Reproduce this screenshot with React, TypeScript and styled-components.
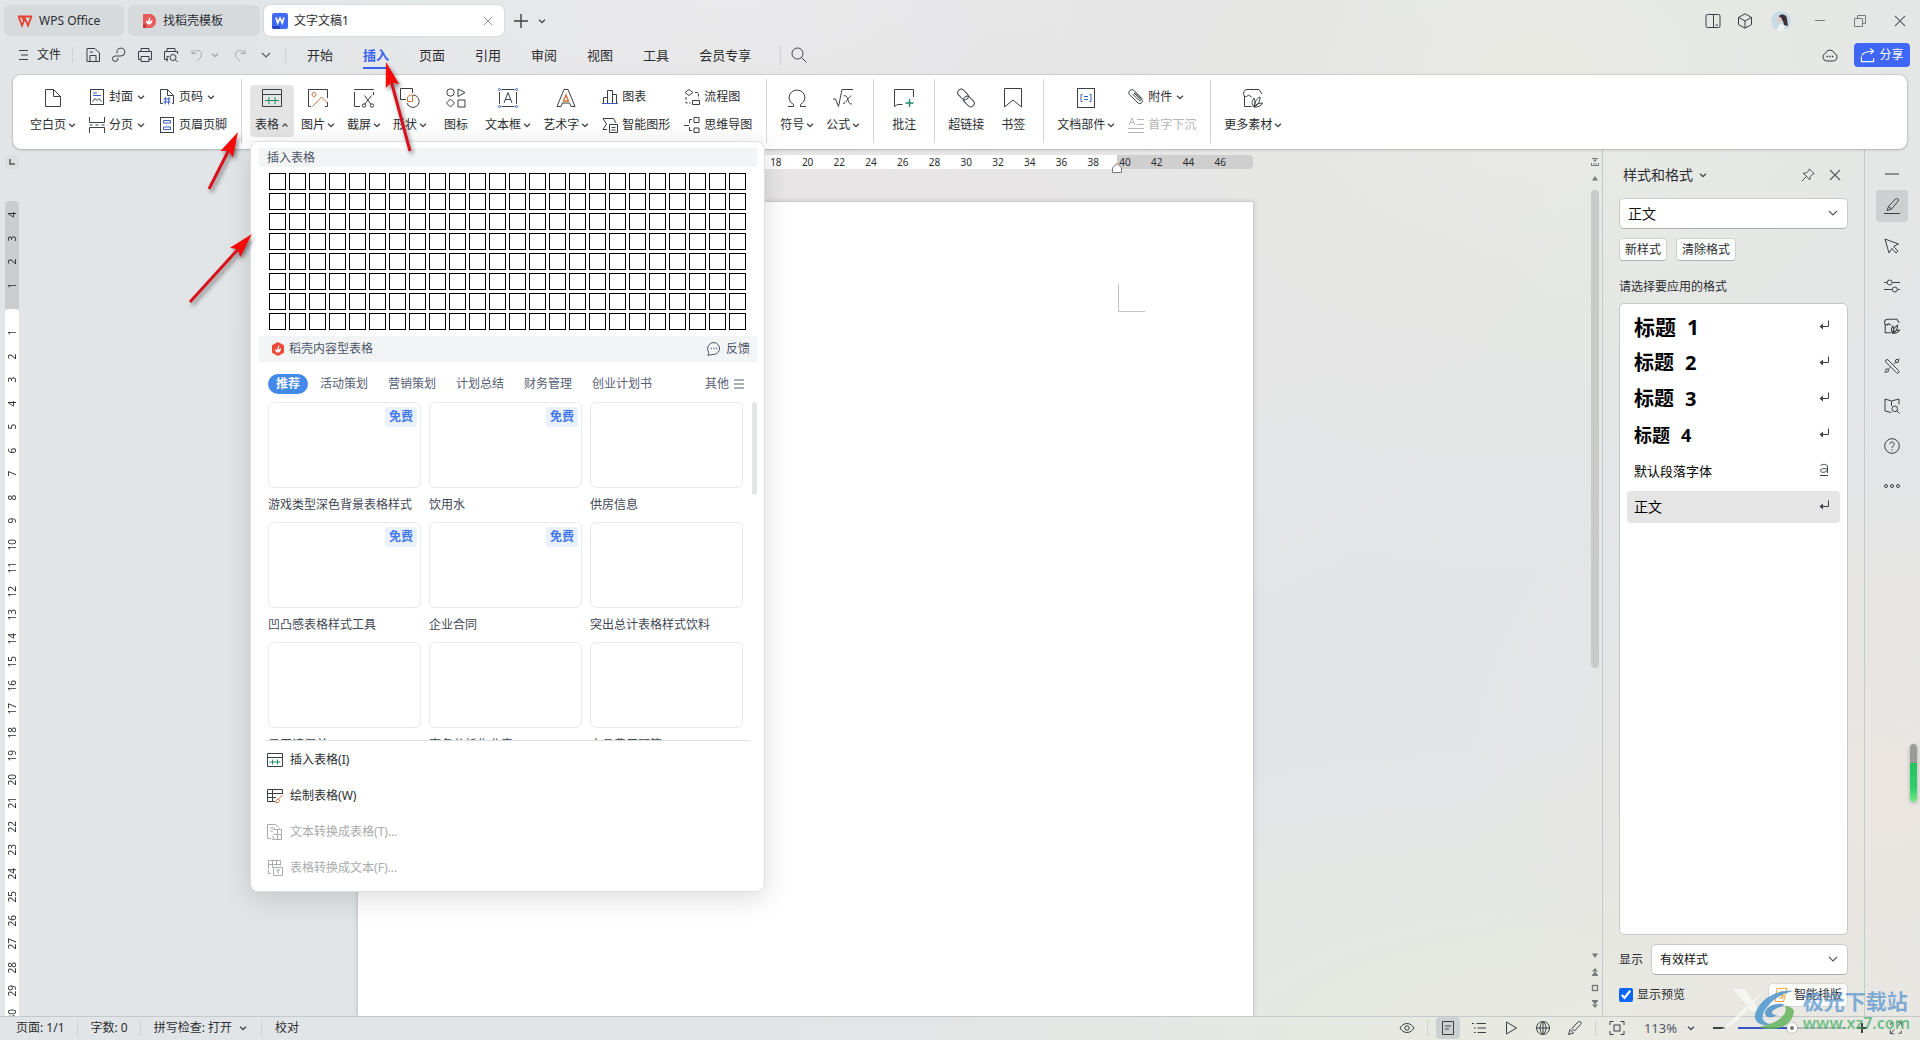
import React from 'react';
import styled, { createGlobalStyle, css } from 'styled-components';

const ink = '#2b2d30';
const blue = '#3a62f0';
const line = '#c6c9cb';
const orange = '#d0733a';
const green = '#1f8a63';
const navy = '#3b5fc0';

const Global = createGlobalStyle`
  *, *::before, *::after { box-sizing: border-box; }
  html, body, #root { margin: 0; height: 100%; }
  body {
    font-family: "Noto Sans", "Noto Sans CJK SC", sans-serif;
    font-size: 12px;
    line-height: 16px;
    color: ${ink};
    overflow: hidden;
  }
  button, select, input { font: inherit; color: inherit; }
  button { border: 0; padding: 0; background: none; white-space: nowrap; }
  svg { display: block; flex: none; }
`;

/* ---------- icons ---------- */

type GlyphProps = { size?: number; box?: number; color?: string; weight?: number; children: React.ReactNode };

function Glyph({ size = 16, box = 16, color = '#3c3f43', weight = 1, children }: GlyphProps) {
  return (
    <svg width={size} height={size} viewBox={`0 0 ${box} ${box}`} fill="none" stroke={color} strokeWidth={weight} aria-hidden="true">
      {children}
    </svg>
  );
}

const Caret = ({ up = false, color = '#4a4d50' }: { up?: boolean; color?: string }) => (
  <Glyph size={8} box={8} color={color} weight={1.4}>
    <path d={up ? 'M1.5 5.5 4 3l2.5 2.5' : 'M1 2.8 4 5.6 7 2.8'} />
  </Glyph>
);

const WideCaret = () => (
  <Glyph size={12} box={12} color="#55585b" weight={1.1}><path d="m2 4 4 4 4-4" /></Glyph>
);

const CloseMark = ({ size = 12, color = '#55585b' }: { size?: number; color?: string }) => (
  <Glyph size={size} box={12} color={color} weight={1.1}><path d="m1 1 10 10M11 1 1 11" /></Glyph>
);

const WpsLogo = () => (
  <Glyph size={16} color="#e8402f" weight={1.8}>
    <path d="M1 3.5h14M1.5 3.5 5 12.5l3-7 3 7 3.5-9M5 3.5l2 4" />
  </Glyph>
);

const DocerLogo = () => (
  <Glyph size={16} color="none">
    <path d="M2 1h7a6 7 0 0 1 0 14H2z" fill="#ea5a5a" />
    <path d="M2 11h3v4H2z" fill="#c93c44" />
    <path d="M9 4c1 2-.5 3-.5 4.5C10 8 11 7 11.500 6.500c0 3-1.500 5-3.500 5S5 10 5 7.500c1 .2 1.700.8 2 1.500C7 7 8 6 9 4z" fill="#fff" />
  </Glyph>
);

const WriterLogo = () => (
  <Glyph size={16} color="none">
    <rect width="16" height="16" rx="2" fill="#3f6af5" />
    <path d="M0 13h8v3H2a2 2 0 0 1-2-2z" fill="#2546c4" />
    <path d="M4 4.500 5.700 10 8 5l2.300 5L12 4.500" stroke="#fff" strokeWidth="1.600" fill="none" />
  </Glyph>
);

const HexFlame = () => (
  <Glyph size={14} box={14} color="none">
    <path d="M7 0l6 3.200v7.600L7 14 1 10.800V3.200z" fill="#ee4a3c" />
    <path d="M8 3c.8 2-.6 3-.6 4.300C8.600 7 9.500 6.500 10 6c0 3-1.300 4.600-3 4.600S4 9.500 4 7.200c.9.100 1.600.6 2 1.200C6 6.500 7 5 8 3z" fill="#fff" />
  </Glyph>
);

const icons: Record<string, React.ReactNode> = {
  blank: <path d="M2.500 1.500h8l7 7v10h-15zM10.500 1.500v7h7" />,
  cover: <><rect x="1.500" y=".5" width="13" height="15" /><path d="M4 4h4M4 6.500h8" stroke={navy} /><path d="m3.500 12.500 2.500-3 2 2 2-2 2.500 3" /></>,
  pagebreak: <path d="M.5 0v5.500h15V0M.5 16v-5.500h15V16M.5 8h3M6.500 8h3M12.500 8h3" />,
  pagenum: <><path d="M4 14.500H1.500V.5h7l6 6v8H13M8.500.5v6h6" /><path d="M6.500 8 6 15.500M10 8l-.5 7.500M4.500 10h7M4.500 13h7" stroke={navy} /></>,
  headfoot: <><rect x="1.500" y=".5" width="13" height="15" /><path d="M4.500 3.500h7v2.500h-7zM4.500 10h7v2.500h-7z" stroke={navy} /></>,
  table: <><path d="M.5 1.500h19v17H.5zM.5 6.500h19" /><path d="M3 12.500h14M7 9v7M13 9v7" stroke={green} /></>,
  image: <><path d="M19.500 10V1.500H.5v17H3M19.500 14v4.500H17" /><circle cx="6" cy="6.500" r="2" stroke={orange} /><path d="m4.500 18.500 9-9.500 6 6" stroke={orange} /></>,
  shot: <><path d="M6 18.500H.5V1.500h19V7" strokeDasharray="20 2" /><path d="m10.500 7.500 6.500 9M17.500 7.500l-7 9" /><circle cx="10" cy="17.500" r="1.700" /><circle cx="18" cy="17.500" r="1.700" /></>,
  shapes: <><path d="M6 11.500H.5V.5h12V5" /><path d="M7.500 13.500V9a5 5 0 0 1 5-2v6.500z" stroke={orange} /><path d="M13 7a6.200 6.200 0 1 1-6 8" /></>,
  glyphs: <><circle cx="4.500" cy="4.500" r="3.700" /><path d="m12 1 7 3.500-7 4zM4.500 11 8.500 15l-4 4-4-4zM12 12h7v7h-7z" /></>,
  textbox: <><path d="M3.500 1.500h13M3.500 18.500h13M1.500 4v12M18.500 4v12" /><path d="m6 15 4-10.500L14 15M7.300 11.500h5.400" /><g stroke={navy}><circle cx="1.500" cy="1.500" r="1" /><circle cx="18.500" cy="1.500" r="1" /><circle cx="1.500" cy="18.500" r="1" /><circle cx="18.500" cy="18.500" r="1" /></g></>,
  wordart: <><path d="M8 1.500h4l7 17h-4l-1.500-3.500h-7L5 18.500H1z" /><path d="M10 7l-2.500 6h5z" stroke={orange} strokeWidth="1.400" /></>,
  chart: <><path d="M1.500 14V8.500h4V14M5.500 14V1.500h5V14M10.500 14V5.500h4V14" /><path d="M0 14.500h16" stroke={navy} /></>,
  smart: <><path d="M5 12.500H1L4.500 7 1 1.500h10.500L14 6" /><path d="M7.500 7.500h8v8h-8zM9.500 10.500h4M9.500 13h4" /></>,
  flow: <><path d="M5 .5 9 3.500l-4 3-4-3zM8.500 11.500h7v4h-7z" /><path d="M11 3.500h3.500v6M2 8v6h4.500" strokeDasharray="3 1.500" /></>,
  mind: <><path d="M10 .5h5v5h-5zM10 11h5v4.500h-5z" /><path d="M8 2.500H5.500V6M5.500 10v3.500H8M0 8.500h5" /></>,
  omega: <path d="M1 18.500h5.500v-2A8 8 0 0 1 2 10a8 8 0 0 1 16 0 8 8 0 0 1-4.500 6.500v2H19" />,
  formula: <><path d="M0 11h2.500l3 7.500L9 1.500h11" /><path d="M10.500 8c3-1 3.500 1 4.500 4s2 5 4 3.500M18.500 8c-2-.500-6 8-8.500 7.500" /></>,
  comment: <><path d="M19.500 9V1.500H.5v17l3-2h5" /><path d="M15.500 11v8M11.500 15h8" stroke={green} strokeWidth="1.300" /></>,
  link: <><rect x="1" y="3" width="12" height="7" rx="3.500" transform="rotate(45 7 6.500)" /><rect x="7" y="10" width="12" height="7" rx="3.500" transform="rotate(45 13 13.500)" /></>,
  bookmark: <path d="M1.500.5h17v18.500L10 12l-8.500 7z" />,
  parts: <><rect x="1.500" y=".5" width="17" height="19" /><path d="M6.500 6.500H5v7h1.500M13.500 6.500H15v7h-1.500M8 8.500h4M8 11.500h4" stroke={navy} /></>,
  clip: <path d="M7 3.500 13.500 10a2.500 2.500 0 0 1-3.500 4L1.800 6A3 3 0 0 1 6 1.500l8 8M4.500 5l6.500 6.500c1 .8 2-.3 1.200-1.200L6 4" />,
  dropcap: <path d="m1 8 3-7 3 7M2 5.500h4M9 2.500h7M9 7.500h7M0 11.500h16M0 15.500h16" />,
  more: <><path d="M8.500 18.500h-7V8C-.5 6 1 1.500 4 1.500h12l3 4.500" /><path d="M1.500 8c1.500 1 3 .5 4-1l3 2M11 19c-3-3-2-6 0-9 1.500 3 1.500 6 0 9 0-4 3-9 6-10 0 4-1.500 8-6 10 2-3 5-4 8.500-4-1.500 3-4.500 4.500-8.500 4" /></>,
  insert: <><path d="M.5 1.500h15v13H.5zM.5 5.500h15" /><path d="M2.500 10h11M5.500 7.500v5M10.500 7.500v5" stroke={green} /></>,
  draw: <><path d="M15.500 6V1.500H.5v12H8M.5 5.500h15M.5 9.500H9M5.500 1.500v12" /><path d="m15.500 7-4 4M11.500 11c-2 0-2 2-3 3.500 2 .8 4 0 4-2z" stroke={orange} /></>,
  txt2tab: <><path d="M4 14.500H.5V.5h8l4 4M3 4h5M3 7h3" /><path d="M6.500 5.500h8v10h-8M10.500 5.500v10M6.500 10.500h8M5 12l2 2-2 2" /></>,
  tab2txt: <><path d="M1.500 9V.5h12v5M1.500 4.500h12M5.500.5V8M9.500.5v5" /><path d="M6.500 7.500h9v8h-9zM9 10h4M11 10v4M1.500 10v3.500H4" /></>,
  feedback: <><path d="M8 1.500a6.500 6 0 1 1-2 12L2 14.500l.7-3A6.300 6.300 0 0 1 8 1.500z" /><path d="M4.800 7.500h1M7.500 7.500h1M10.200 7.500h1" strokeWidth="1.300" /></>,
  save: <path d="M2 1.500h8l4.500 4.500v8.500H2zM5 14V8.500h6V14M5 5h3" />,
  export: <path d="M6 6.500V5.200A3.900 3.900 0 1 1 9.900 9H4.200a2.700 2.700 0 1 0 2.700 3v-1" />,
  print: <path d="M4 4.500v-3h8v3M4 12.500H1.500v-8h13v8H12M4 9.500h8v5H4z" />,
  preview: <><path d="M4 4.500v-3h8v3M5 12.500H1.500v-8h13V7M4 14.500v-5h2" /><circle cx="10" cy="10.500" r="3" /><path d="m12.200 12.700 2.500 2.500" /></>,
  undo: <path d="M3 2.500v4h4.500M3.300 6.300C6 2.500 12 2.500 12.500 7c.3 3-2 5-4.500 7" />,
  redo: <path d="M13 2.500v4H8.500M12.700 6.300C10 2.500 4 2.500 3.500 7c-.3 3 2 5 4.500 7" />,
  search: <><circle cx="6.500" cy="6.500" r="5.500" /><path d="m10.500 10.500 5 5" /></>,
  panels: <><rect x="1" y="1.500" width="14" height="13" rx="1.500" /><path d="M8.500 1.500v13M10.500 12h2.500" /></>,
  cube: <path d="m8 .8 6.500 3.600v7.200L8 15.200l-6.500-3.600V4.400zM1.500 4.400 8 8l6.500-3.600M8 8v7" />,
  minimize: <path d="M3 7.500h10" />,
  restore: <path d="M2.500 5.500h8v8h-8zM5.500 5.500v-3h8v8h-3" />,
  cloud: <><path d="M4.500 14a4 4 0 0 1-.8-7.800 4.500 4.500 0 0 1 8.600 0 4 4 0 0 1-.8 7.800z" /><path d="M4.600 9.500h1.500M7.250 9.500h1.500M9.900 9.500h1.500" strokeWidth="1.500" /></>,
  share: <path d="M1.500 9v5.500h13V11M2 8c1.500-3.500 5-4.500 12-4.500M11 .5l3.500 3-3.500 3" />,
  pin: <path d="m9.500 1 5.500 5.500-1.800.7-2.700 2.700-.3 3.600L2.500 6l3.600-.3L8.800 3zM6.300 9.700 1 15" />,
  brush: <path d="M0 15.500h16M3 12.500l1.500-4L11.500 1a1.600 1.600 0 0 1 2.500 2.200L7.500 11zM4.500 8.500l3 2.500" />,
  cursor: <path d="m1 1 13.500 5-5 2.500L14 13l-2 2-4-4.500-3 4.500z" />,
  sliders: <><path d="M0 4.500h3M8.500 4.500H16M0 11.500h8M13.500 11.500H16" /><circle cx="5.700" cy="4.500" r="2.500" /><circle cx="10.800" cy="11.500" r="2.500" /></>,
  tools: <><path d="m4.200 2 10.300 10.500a1.500 1.500 0 0 1-2.200 2.200L2 4.200A1.550 1.550 0 0 1 4.200 2z" /><circle cx="13" cy="3" r="1.600" /><circle cx="3" cy="12.500" r="1.600" /><path d="m11.800 4.200-2 2M14.200 1.800l1.300-1.300M4.200 11.300l2-2M1.800 13.700.5 15" /></>,
  book: <><path d="M7.500 14.500 1 13V1l6.500 2L15 1v5.500M7.500 3v5" /><circle cx="10.800" cy="10.800" r="2.800" /><path d="m12.800 12.800 2.700 2.700" /></>,
  help: <><circle cx="8" cy="8" r="7.300" /><path d="M5.800 6.200c0-3 4.500-2.800 4.400 0C10.200 7.800 8 8 8 10M8 11.300v1.200" /></>,
  dots: <><circle cx="2" cy="8" r="1.500" /><circle cx="8" cy="8" r="1.500" /><circle cx="14" cy="8" r="1.500" /></>,
  enter: <><path d="M12.500 1.500v6H5" /><path d="M7 4.500 3.500 7.500 7 10.500z" fill="#3c3f43" stroke="none" /></>,
  char: <path d="M4.500 2.500c1.500-1.500 7-2 7 1.500v6M11.500 6C8 5.500 4.500 5.500 4.500 7.500c0 2.500 5 2.500 7-.5M4 12.500h8" />,
  eye: <><path d="M1 8c3.500-6 10.500-6 14 0-3.500 6-10.500 6-14 0z" /><circle cx="8" cy="8" r="2.200" /></>,
  pageview: <path d="M2.500 1.500h11v13h-11zM5 6h6M5 9h4" />,
  outline: <path d="M1 3.500h2M5.500 3.500H15M3 8h1.500M6.500 8H15M3 12.500h1.500M6.500 12.500H15" />,
  play: <path d="m3.500 2 10 6-10 6z" />,
  globe: <><circle cx="8" cy="8" r="6.500" /><path d="M1.500 8h13M8 1.500v13M8 1.500c-4 3.500-4 9.500 0 13 4-3.500 4-9.500 0-13z" /></>,
  pen: <path d="m1.500 14.500 1.500-5 3.500 3.500zM5 8.500 11 2c2-1.500 4 .5 2.500 2.500L7.500 11z" />,
  fit: <><path d="M1 5V1.500h3.500M11.500 1.500H15V5M15 11v3.500h-3.500M4.500 14.500H1V11" /><rect x="5" y="5" width="6" height="6" /></>,
  full: <path d="M10 1.500h4.500V6M14.500 1.500l-5 5M6 14.500H1.500V10M1.500 14.500l5-5M2 5V2h3M14 11v3h-3" />,
  smartfmt: <><path d="M3 1.500h10L9.500 14.500H1z" stroke="#f0a63a" /><path d="M9.500 5.500c-4-1.500-4.500 2.500-2 2.500s2 3.500-2 2.500" stroke="#f0a63a" strokeWidth="1.500" /></>,
};

/* ---------- window frame ---------- */

const Window = styled.div`
  position: relative;
  height: 100vh;
  display: grid;
  grid-template-rows: 37px 38px 74px minmax(0, 1fr) 24px;
  overflow: hidden;
  background:
    radial-gradient(700px 420px at 47% 24%, #e8e5e6 0%, rgba(232, 229, 230, 0) 100%),
    radial-gradient(600px 500px at 80% 8%, #e9eae4 0%, rgba(233, 234, 228, 0) 100%),
    radial-gradient(420px 400px at 98% 76%, #ebe6e2 0%, rgba(235, 230, 226, 0) 100%),
    radial-gradient(800px 300px at 82% 100%, #e8eae0 0%, rgba(232, 234, 224, 0) 100%),
    radial-gradient(500px 200px at 38% 0%, #ebecee 0%, rgba(235, 236, 238, 0) 100%),
    #e2e5e7;
`;

const Row = styled.div<{ $gap?: number }>`
  display: flex;
  align-items: center;
  gap: ${(p) => p.$gap ?? 0}px;
`;

const Spacer = styled.div`flex: 1;`;

const TitleBar = styled.header`
  display: flex;
  align-items: center;
  padding: 5px 0 1px 4px;
  gap: 4px;
`;

const DocTab = styled.div<{ $width: number; $active?: boolean }>`
  display: flex;
  align-items: center;
  gap: 6px;
  width: ${(p) => p.$width}px;
  height: 31px;
  padding: 0 10px 0 ${(p) => (p.$active ? 8 : 13)}px;
  border-radius: 6px;
  background: ${(p) => (p.$active ? '#fff' : '#d6dadd')};
  box-shadow: ${(p) => (p.$active ? '0 0 2px rgba(0,0,0,.2)' : 'none')};
`;

const IconButton = styled.button<{ $w?: number; $h?: number; $on?: boolean }>`
  display: flex;
  align-items: center;
  justify-content: center;
  width: ${(p) => p.$w ?? 26}px;
  height: ${(p) => p.$h ?? 26}px;
  border-radius: 4px;
  background: ${(p) => (p.$on ? '#cdd0d1' : 'transparent')};
`;

const MenuBar = styled.nav`
  display: flex;
  align-items: center;
  padding: 0 10px 2px 13px;
`;

const FileButton = styled.button`
  display: flex;
  align-items: center;
  gap: 8px;
  padding: 0 6px;
`;

const VRule = styled.span<{ $h?: number; $l?: number; $r?: number }>`
  width: 1px;
  height: ${(p) => p.$h ?? 16}px;
  margin: 0 ${(p) => p.$r ?? 0}px 0 ${(p) => p.$l ?? 0}px;
  background: #cfd1d3;
`;

const MenuTab = styled.button<{ $active?: boolean }>`
  position: relative;
  padding: 0 15px;
  height: 30px;
  font-size: 13px;
  ${(p) => p.$active && css`
    color: ${blue};
    font-weight: 700;
    &::after {
      content: '';
      position: absolute;
      left: 15px;
      right: 15px;
      bottom: 1px;
      height: 2px;
      background: ${blue};
    }
  `}
`;

const ShareButton = styled.button`
  display: flex;
  align-items: center;
  justify-content: center;
  gap: 4px;
  width: 56px;
  height: 24px;
  margin-left: 11px;
  border-radius: 4px;
  background: #3f66f6;
  color: #fff;
`;

const Avatar = styled.span`
  display: block;
  width: 20px;
  height: 20px;
  border-radius: 50%;
  overflow: hidden;
`;

/* ---------- ribbon ---------- */

const Ribbon = styled.section`
  position: relative;
  z-index: 2;
  display: flex;
  margin: 0 13px;
  padding: 0 4px;
  border-radius: 8px;
  background: #fff;
  box-shadow: 0 0 2px rgba(0, 0, 0, 0.3), 0 1px 3px rgba(0, 0, 0, 0.14);
`;

const Group = styled.div`
  position: relative;
  display: flex;
  gap: 2px;
  padding: 10px 8px 12px;
  &:not(:last-child) { border-right: 1px solid transparent; }
  &:not(:last-child)::after {
    content: '';
    position: absolute;
    right: -1px;
    top: 4px;
    bottom: 6px;
    width: 1px;
    background: #d2d4d6;
  }
`;

const BigButton = styled.button<{ $on?: boolean }>`
  display: flex;
  flex-direction: column;
  align-items: center;
  gap: 9px;
  min-width: 44px;
  height: 52px;
  padding: 3px 5px 0;
  border-radius: 4px;
  background: ${(p) => (p.$on ? '#e4e4e5' : 'transparent')};
`;

const Stack = styled.div`
  display: flex;
  flex-direction: column;
  gap: 4px;
`;

const SmallButton = styled.button`
  display: flex;
  align-items: center;
  gap: 4px;
  height: 24px;
  padding: 0 6px;
  &:disabled { color: #b4b6b8; }
`;

const Anchor = styled.div`position: relative;`;

type ToolProps = { icon: string; label: string; menu?: boolean; open?: boolean; disabled?: boolean };

const Big = ({ icon, label, menu, open }: ToolProps) => (
  <BigButton $on={open} type="button">
    <Glyph size={20} box={20}>{icons[icon]}</Glyph>
    <Row $gap={2}>{label}{menu && <Caret up={open} />}</Row>
  </BigButton>
);

const Small = ({ icon, label, menu, disabled }: ToolProps) => (
  <SmallButton type="button" disabled={disabled}>
    <Glyph color={disabled ? '#b4b6b8' : undefined}>{icons[icon]}</Glyph>
    {label}{menu && <Caret />}
  </SmallButton>
);

/* ---------- table drop-down ---------- */

const Popup = styled.div`
  position: absolute;
  left: 0;
  top: 56px;
  width: 515px;
  padding: 6px 7px 5px 8px;
  border: 1px solid #dddfe2;
  border-radius: 8px;
  background: #fff;
  box-shadow: 0 6px 28px rgba(0, 0, 0, 0.14);
`;

const Band = styled.div<{ $h: number; $pad: number }>`
  display: flex;
  align-items: center;
  gap: 4px;
  height: ${(p) => p.$h}px;
  padding: 0 7px 0 ${(p) => p.$pad}px;
  background: #f3f4f6;
  color: #4b5568;
`;

const CellGrid = styled.div`
  display: grid;
  grid-template-columns: repeat(24, 17px);
  grid-auto-rows: 17px;
  gap: 3px;
  margin: 6px 0 6px 10px;
`;

const Cell = styled.button`
  border: 1px solid #000;
  background: #fff;
`;

const PlainButton = styled.button`
  display: flex;
  align-items: center;
  gap: 4px;
`;

const Categories = styled.div`
  display: flex;
  align-items: center;
  gap: 20px;
  height: 20px;
  margin: 12px 12px 8px 9px;
  color: #566074;
`;

const Pill = styled.button`
  width: 40px;
  height: 20px;
  margin-right: -8px;
  border-radius: 10px;
  background: #4389e9;
  color: #fff;
  font-weight: 700;
`;

const Gallery = styled.div`
  display: flex;
  gap: 9px;
  height: 338px;
  padding-left: 9px;
  overflow: hidden;
`;

const Cards = styled.div`
  display: grid;
  grid-template-columns: repeat(3, 153px);
  grid-auto-rows: 120px;
  gap: 0 8px;
`;

const Card = styled.figure`margin: 0;`;

const Thumb = styled.div`
  display: flex;
  justify-content: flex-end;
  align-items: flex-start;
  height: 86px;
  padding: 4px 3px;
  border: 1px solid #e9eaec;
  border-radius: 6px;
`;

const Free = styled.span`
  padding: 2px 4px;
  border-radius: 3px;
  background: #e9f1fd;
  color: #4477ec;
  font-weight: 700;
`;

const Caption = styled.figcaption`
  padding-top: 9px;
  white-space: nowrap;
  color: #3f4656;
`;

const GalleryThumb = styled.div`
  width: 6px;
  height: 93px;
  border-radius: 3px;
  background: #e4e5e7;
`;

const Commands = styled.div`
  display: flex;
  flex-direction: column;
  margin: 0 7px 0 6px;
  padding-top: 1px;
  border-top: 1px solid #dcdee0;
`;

const Command = styled.button`
  display: flex;
  align-items: center;
  gap: 7px;
  height: 36px;
  padding-left: 2px;
  &:disabled { color: #a9abad; }
`;

const categories = ['活动策划', '营销策划', '计划总结', '财务管理', '创业计划书'];

const templates = [
  { name: '游戏类型深色背景表格样式', free: true },
  { name: '饮用水', free: true },
  { name: '供房信息' },
  { name: '凹凸感表格样式工具', free: true },
  { name: '企业合同', free: true },
  { name: '突出总计表格样式饮料' },
  { name: '员工请假单' },
  { name: '商务分析作业表' },
  { name: '产品费用预算' },
];

const commands = [
  { icon: 'insert', label: '插入表格(I)' },
  { icon: 'draw', label: '绘制表格(W)' },
  { icon: 'txt2tab', label: '文本转换成表格(T)...', disabled: true },
  { icon: 'tab2txt', label: '表格转换成文本(F)...', disabled: true },
];

function TablePopup() {
  return (
    <Popup>
      <Band $h={19} $pad={8}>插入表格</Band>
      <CellGrid>
        {Array.from({ length: 192 }, (_, i) => (
          <Cell key={i} type="button" aria-label={`${Math.floor(i / 24) + 1} × ${(i % 24) + 1}`} />
        ))}
      </CellGrid>
      <Band $h={26} $pad={12}>
        <HexFlame />稻壳内容型表格<Spacer />
        <PlainButton type="button"><Glyph color="#4b5568">{icons.feedback}</Glyph>反馈</PlainButton>
      </Band>
      <Categories>
        <Pill type="button">推荐</Pill>
        {categories.map((c) => <button key={c} type="button">{c}</button>)}
        <Spacer />
        <PlainButton type="button">
          其他<Glyph size={12} box={12} color="#8b93a1" weight={1.4}><path d="M1 2h10M1 6h10M1 10h10" /></Glyph>
        </PlainButton>
      </Categories>
      <Gallery>
        <Cards>
          {templates.map((t) => (
            <Card key={t.name}>
              <Thumb>{t.free && <Free>免费</Free>}</Thumb>
              <Caption>{t.name}</Caption>
            </Card>
          ))}
        </Cards>
        <GalleryThumb />
      </Gallery>
      <Commands>
        {commands.map((c) => (
          <Command key={c.icon} type="button" disabled={c.disabled}>
            <Glyph color={c.disabled ? '#a9abad' : undefined}>{icons[c.icon]}</Glyph>{c.label}
          </Command>
        ))}
      </Commands>
    </Popup>
  );
}

/* ---------- workspace ---------- */

const Workspace = styled.main`
  display: flex;
  min-height: 0;
`;

const RulerColumn = styled.div`
  display: flex;
  flex-direction: column;
  width: 23px;
  padding: 6px 4px 0 5px;
  overflow: hidden;
  font-size: 10px;
  line-height: 14px;
`;

const TabStop = styled.button`
  flex: none;
  display: flex;
  align-items: center;
  justify-content: center;
  width: 14px;
  height: 14px;
  margin-bottom: 32px;
  border-radius: 3px;
  background: #dcdfe0;
`;

const RulerPart = styled.div<{ $margin?: boolean }>`
  flex: none;
  display: flex;
  flex-direction: column;
  height: ${(p) => (p.$margin ? 108 : 717)}px;
  padding: ${(p) => (p.$margin ? '2px 0 12px' : '12px 0 0')};
  border-radius: 4px 4px 0 0;
  background: ${(p) => (p.$margin ? '#cbced0' : '#fff')};
`;

const VMark = styled.span`
  flex: 1;
  display: flex;
  align-items: center;
  justify-content: center;
  writing-mode: vertical-rl;
  transform: rotate(180deg);
`;

const Canvas = styled.div`
  flex: 1;
  display: flex;
  flex-direction: column;
  align-items: center;
  padding-top: 6px;
  overflow: hidden;
`;

const Ruler = styled.div`
  position: relative;
  flex: none;
  display: flex;
  width: 895px;
  height: 14px;
  margin-bottom: 32px;
  padding: 0 17px 0 402px;
  border-radius: 4px;
  background: linear-gradient(90deg, #fff 759px, #cfcfcf 759px);
  font-size: 10px;
  line-height: 14px;
`;

const HMark = styled.span`
  flex: 1;
  text-align: center;
`;

const Indent = styled.span`
  position: absolute;
  left: 754px;
  top: 8px;
`;

const Paper = styled.div`
  flex: 1;
  width: 897px;
  padding: 82px 108px 0 0;
  border: 1px solid #cdcdcd;
  border-bottom: 0;
  background: #fff;
  box-shadow: 0 0 5px rgba(0, 0, 0, 0.12);
`;

const Corner = styled.div`
  width: 27px;
  height: 28px;
  margin-left: auto;
  border: solid #c4c4c4;
  border-width: 0 0 1px 1px;
`;

const ScrollColumn = styled.div`
  display: flex;
  flex-direction: column;
  align-items: center;
  width: 14px;
  padding: 5px 1px 4px 0;
`;

const Track = styled.div`
  flex: 1;
  width: 8px;
  margin-top: 4px;
`;

const TrackThumb = styled.div`
  height: 63%;
  border-radius: 4px;
  background: #c9cbc9;
`;

/* ---------- styles pane ---------- */

const Pane = styled.aside`
  display: flex;
  flex-direction: column;
  width: 263px;
  padding: 0 16px 9px;
  border: solid ${line};
  border-width: 0 1px;
`;

const PaneHead = styled.div`
  display: flex;
  align-items: center;
  height: 49px;
  padding: 2px 0 0 4px;
`;

const PaneTitle = styled.button`
  display: flex;
  align-items: center;
  gap: 6px;
  font-size: 14px;
`;

const SelectBox = styled.div<{ $size: number }>`
  position: relative;
  flex: 1;
  font-size: ${(p) => p.$size}px;
  select {
    width: 100%;
    height: 31px;
    padding: 0 8px;
    appearance: none;
    border: 1px solid #c9cbcb;
    border-bottom-color: #a9abab;
    border-radius: 5px;
    background: #fff;
    color: #111;
  }
  svg {
    position: absolute;
    right: 9px;
    top: 9px;
  }
`;

const Chips = styled.div`
  display: flex;
  gap: 9px;
  margin-top: 9px;
`;

const Chip = styled.button`
  height: 23px;
  padding: 0 5px;
  border: 1px solid #cfd1d1;
  border-bottom-color: #b0b2b2;
  border-radius: 4px;
  background: #fdfdfd;
`;

const ListLabel = styled.h2`
  margin: 18px 0 8px;
  font-size: 12px;
  font-weight: 400;
`;

const StyleList = styled.ul`
  flex: 1;
  display: flex;
  flex-direction: column;
  gap: 4px;
  margin: 0 0 9px;
  padding: 7px;
  border: 1px solid #c6c8c8;
  border-radius: 5px;
  background: #fff;
  list-style: none;
`;

const StyleItem = styled.li<{ $size: number; $bold?: boolean; $on?: boolean }>`
  display: flex;
  align-items: center;
  gap: 11px;
  height: 32px;
  padding: 0 8px 0 7px;
  border-radius: 4px;
  background: ${(p) => (p.$on ? '#e5e5e5' : 'transparent')};
  color: #000;
  font-size: ${(p) => p.$size}px;
  font-weight: ${(p) => (p.$bold ? 700 : 400)};
`;

const PreviewRow = styled.div`
  display: flex;
  align-items: center;
  justify-content: space-between;
  margin-top: 8px;
`;

const CheckLabel = styled.label`
  display: flex;
  align-items: center;
  gap: 4px;
  input {
    width: 14px;
    height: 14px;
    margin: 0;
    accent-color: #0a66f5;
  }
`;

const FormatButton = styled.button`
  display: flex;
  align-items: center;
  gap: 4px;
  height: 24px;
  padding: 0 5px;
  border: 1px solid #d6d8d6;
  border-radius: 4px;
  background: #fbfbfa;
`;

const Rail = styled.div`
  display: flex;
  flex-direction: column;
  align-items: center;
  gap: 8px;
  width: 55px;
  padding: 13px 2px 0 0;
`;

const styleItems = [
  { name: '标题', level: '1', size: 21, bold: true },
  { name: '标题', level: '2', size: 20, bold: true },
  { name: '标题', level: '3', size: 20, bold: true },
  { name: '标题', level: '4', size: 18, bold: true },
  { name: '默认段落字体', size: 13 },
  { name: '正文', size: 14, on: true },
];

/* ---------- status bar ---------- */

const StatusBar = styled.footer`
  display: flex;
  align-items: center;
  padding: 0 11px 1px 10px;
  border-top: 1px solid ${line};
`;

const StatusItem = styled.button`
  display: flex;
  align-items: center;
  gap: 7px;
  padding: 0 12px 0 6px;
  & + span + & { padding-left: 13px; }
`;

const ZoomValue = styled.button`
  display: flex;
  align-items: center;
  gap: 10px;
  padding: 0 11px 0 14px;
  font-size: 13px;
  color: #50586a;
`;

const Zoom = styled.input`
  width: 108px;
  height: 12px;
  margin: 0 6px;
  appearance: none;
  background: linear-gradient(90deg, #3a52c4 50%, #b4b7b8 50%) center / 100% 2px no-repeat;
  &::-webkit-slider-thumb {
    appearance: none;
    width: 10px;
    height: 10px;
    border: 3px solid #fff;
    border-radius: 50%;
    background: #777;
    box-shadow: 0 0 2px rgba(0, 0, 0, 0.4);
  }
`;

/* ---------- overlays ---------- */

const Overlay = styled.svg`
  position: absolute;
  left: 0;
  top: 0;
  z-index: 5;
  pointer-events: none;
  filter: drop-shadow(2px 3px 2px rgba(0, 0, 0, 0.45));
`;

const Meter = styled.div`
  position: absolute;
  right: 3px;
  top: 744px;
  width: 7px;
  height: 58px;
  border-radius: 4px;
  background: linear-gradient(#9a9a98 19px, #22c35e 19px, #2fd06a 44px, #7be886);
  box-shadow: 0 1px 4px rgba(0, 0, 0, 0.25);
`;

const Watermark = styled.div`
  position: absolute;
  right: 10px;
  bottom: 7px;
  z-index: 4;
  display: flex;
  align-items: flex-end;
  pointer-events: none;
`;

const WatermarkText = styled.div`
  display: flex;
  flex-direction: column;
  margin-left: 4px;
  font-weight: 700;
  font-size: 21px;
  line-height: 24px;
  color: rgba(84, 146, 206, 0.72);
  span:last-child {
    font-size: 16px;
    font-weight: 600;
    line-height: 20px;
    color: rgba(80, 180, 110, 0.8);
  }
`;

function Arrow({ from, to }: { from: [number, number]; to: [number, number] }) {
  const length = Math.hypot(to[0] - from[0], to[1] - from[1]);
  const angle = (Math.atan2(to[1] - from[1], to[0] - from[0]) * 180) / Math.PI;
  return (
    <g transform={`translate(${from[0]} ${from[1]}) rotate(${angle})`}>
      <path d={`M0 -1.500H${length - 18}V1.500H0z`} fill="#d8101c" />
      <path d={`M${length} 0 ${length - 25} -7 ${length - 21} 0 ${length - 25} 7z`} fill="#f50a0a" />
    </g>
  );
}

const menus = ['开始', '插入', '页面', '引用', '审阅', '视图', '工具', '会员专享'];
const marks = Array.from({ length: 15 }, (_, i) => 18 + i * 2);

export default function App() {
  return (
    <Window>
      <Global />
      <TitleBar>
        <DocTab $width={120}><WpsLogo />WPS Office</DocTab>
        <DocTab $width={132}><DocerLogo />找稻壳模板</DocTab>
        <DocTab $width={240} $active>
          <WriterLogo />文字文稿1<Spacer />
          <IconButton $w={12} type="button" aria-label="关闭"><CloseMark size={10} color="#85888b" /></IconButton>
        </DocTab>
        <IconButton type="button" aria-label="新建">
          <Glyph size={14} box={14} weight={1.4}><path d="M7 0v14M0 7h14" /></Glyph>
        </IconButton>
        <IconButton $w={8} type="button" aria-label="标签列表"><Caret /></IconButton>
        <Spacer />
        <Row>
          <IconButton $w={32} type="button" aria-label="侧栏"><Glyph>{icons.panels}</Glyph></IconButton>
          <IconButton $w={32} type="button" aria-label="应用"><Glyph>{icons.cube}</Glyph></IconButton>
          <IconButton $w={39} type="button" aria-label="账户">
            <Avatar>
              <svg width="20" height="20" viewBox="0 0 20 20" aria-hidden="true">
                <rect width="20" height="20" fill="#c9dbe3" />
                <path d="M8 5c3-3 8-1 8 3l1 7-4-1-1-4-3-2z" fill="#3b3238" />
                <path d="M7 7c1-2 4-1 4 2l-1 3-3-1z" fill="#e6c9bf" />
                <path d="m9 13 4 1 1 6H5z" fill="#eef3f5" />
              </svg>
            </Avatar>
          </IconButton>
          <IconButton $w={40} type="button" aria-label="最小化"><Glyph color="#77797b">{icons.minimize}</Glyph></IconButton>
          <IconButton $w={40} type="button" aria-label="还原"><Glyph color="#77797b">{icons.restore}</Glyph></IconButton>
          <IconButton $w={40} type="button" aria-label="关闭窗口"><CloseMark color="#66686a" /></IconButton>
        </Row>
      </TitleBar>

      <MenuBar>
        <FileButton type="button">
          <Glyph size={10} box={10}><path d="M0 .5h9M2 5h7M0 9.500h9" /></Glyph>文件
        </FileButton>
        <VRule $l={5} $r={7} />
        <IconButton type="button" aria-label="保存"><Glyph>{icons.save}</Glyph></IconButton>
        <IconButton type="button" aria-label="输出"><Glyph>{icons.export}</Glyph></IconButton>
        <IconButton type="button" aria-label="打印"><Glyph>{icons.print}</Glyph></IconButton>
        <IconButton type="button" aria-label="打印预览"><Glyph>{icons.preview}</Glyph></IconButton>
        <IconButton type="button" aria-label="撤销"><Glyph color="#a6a9ac">{icons.undo}</Glyph></IconButton>
        <IconButton $w={10} type="button" aria-label="撤销列表"><Caret color="#a6a9ac" /></IconButton>
        <VRule $h={0} $r={6} />
        <IconButton type="button" aria-label="恢复"><Glyph color="#a6a9ac">{icons.redo}</Glyph></IconButton>
        <IconButton type="button" aria-label="更多"><WideCaret /></IconButton>
        <VRule $l={6} $r={6} />
        {menus.map((m) => <MenuTab key={m} type="button" $active={m === '插入'}>{m}</MenuTab>)}
        <VRule $h={20} $l={14} $r={5} />
        <IconButton type="button" aria-label="搜索"><Glyph>{icons.search}</Glyph></IconButton>
        <Spacer />
        <IconButton type="button" aria-label="云服务"><Glyph>{icons.cloud}</Glyph></IconButton>
        <ShareButton type="button"><Glyph size={15} color="#fff" weight={1.2}>{icons.share}</Glyph>分享</ShareButton>
      </MenuBar>

      <Ribbon>
        <Group>
          <Big icon="blank" label="空白页" menu />
          <Stack><Small icon="cover" label="封面" menu /><Small icon="pagebreak" label="分页" menu /></Stack>
          <Stack><Small icon="pagenum" label="页码" menu /><Small icon="headfoot" label="页眉页脚" /></Stack>
        </Group>
        <Group>
          <Anchor>
            <Big icon="table" label="表格" menu open />
            <TablePopup />
          </Anchor>
          <Big icon="image" label="图片" menu />
          <Big icon="shot" label="截屏" menu />
          <Big icon="shapes" label="形状" menu />
          <Big icon="glyphs" label="图标" />
          <Big icon="textbox" label="文本框" menu />
          <Big icon="wordart" label="艺术字" menu />
          <Stack><Small icon="chart" label="图表" /><Small icon="smart" label="智能图形" /></Stack>
          <Stack><Small icon="flow" label="流程图" /><Small icon="mind" label="思维导图" /></Stack>
        </Group>
        <Group>
          <Big icon="omega" label="符号" menu />
          <Big icon="formula" label="公式" menu />
        </Group>
        <Group><Big icon="comment" label="批注" /></Group>
        <Group>
          <Big icon="link" label="超链接" />
          <Big icon="bookmark" label="书签" />
        </Group>
        <Group>
          <Big icon="parts" label="文档部件" menu />
          <Stack><Small icon="clip" label="附件" menu /><Small icon="dropcap" label="首字下沉" disabled /></Stack>
        </Group>
        <Group><Big icon="more" label="更多素材" menu /></Group>
      </Ribbon>

      <Workspace>
        <RulerColumn>
          <TabStop type="button" aria-label="制表符">
            <Glyph size={8} box={8} color="#77797b" weight={2}><path d="M2 1v5h5" /></Glyph>
          </TabStop>
          <RulerPart $margin>{[4, 3, 2, 1].map((n) => <VMark key={n}>{n}</VMark>)}</RulerPart>
          <RulerPart>{Array.from({ length: 30 }, (_, i) => <VMark key={i}>{i + 1}</VMark>)}</RulerPart>
        </RulerColumn>

        <Canvas>
          <Ruler>
            {marks.map((n) => <HMark key={n}>{n}</HMark>)}
            <Indent>
              <Glyph size={10} box={10} color="#77797b"><path d="M.5 9.500V4.500L5 .7l4.500 3.800v5z" fill="#fff" /></Glyph>
            </Indent>
          </Ruler>
          <Paper><Corner /></Paper>
        </Canvas>

        <ScrollColumn>
          <IconButton $w={13} $h={16} type="button" aria-label="标尺">
            <Glyph size={8} box={8} color="none"><path d="M1 0h6v1H1zM2 1.500h4L4 4zM0 5h1v2h6V5h1v3H0zM2.500 5h1v1.500h-1zM4.500 5h1v1.500h-1z" fill="#77797b" /></Glyph>
          </IconButton>
          <IconButton $w={13} $h={16} type="button" aria-label="向上">
            <Glyph size={6} box={6} color="none"><path d="M3 1 6 5.500H0z" fill="#77797b" /></Glyph>
          </IconButton>
          <Track><TrackThumb /></Track>
          <IconButton $w={13} $h={16} type="button" aria-label="向下">
            <Glyph size={6} box={6} color="none"><path d="M3 5 6 .5H0z" fill="#77797b" /></Glyph>
          </IconButton>
          <IconButton $w={13} $h={16} type="button" aria-label="上一页">
            <Glyph size={8} box={8} color="none"><path d="M4 0l3 3.500H1zM4 3.500 7 7H1zM1 7h6v1H1z" fill="#77797b" /></Glyph>
          </IconButton>
          <IconButton $w={13} $h={16} type="button" aria-label="浏览对象">
            <Glyph size={8} box={8} color="#77797b" weight={1.4}><rect x="1.500" y="1.500" width="5" height="5" /></Glyph>
          </IconButton>
          <IconButton $w={13} $h={16} type="button" aria-label="下一页">
            <Glyph size={8} box={8} color="none"><path d="M4 8l3-3.500H1zM4 4.500 7 1H1zM1 0h6v1H1z" fill="#77797b" /></Glyph>
          </IconButton>
        </ScrollColumn>

        <Pane>
          <PaneHead>
            <PaneTitle type="button">样式和格式<Caret /></PaneTitle>
            <Spacer />
            <IconButton $w={28} type="button" aria-label="固定"><Glyph size={14}>{icons.pin}</Glyph></IconButton>
            <IconButton type="button" aria-label="关闭窗格"><CloseMark /></IconButton>
          </PaneHead>
          <Row>
            <SelectBox $size={14}>
              <select aria-label="当前样式" defaultValue="正文"><option>正文</option></select>
              <WideCaret />
            </SelectBox>
          </Row>
          <Chips>
            <Chip type="button">新样式</Chip>
            <Chip type="button">清除格式</Chip>
          </Chips>
          <ListLabel>请选择要应用的格式</ListLabel>
          <StyleList>
            {styleItems.map((s) => (
              <StyleItem key={s.name + (s.level ?? '')} $size={s.size} $bold={s.bold} $on={s.on}>
                <span>{s.name}</span>{s.level && <span>{s.level}</span>}
                <Spacer />
                <Glyph>{s.name === '默认段落字体' ? icons.char : icons.enter}</Glyph>
              </StyleItem>
            ))}
          </StyleList>
          <Row $gap={8}>
            <label htmlFor="shown">显示</label>
            <SelectBox $size={12}>
              <select id="shown" defaultValue="有效样式"><option>有效样式</option></select>
              <WideCaret />
            </SelectBox>
          </Row>
          <PreviewRow>
            <CheckLabel><input type="checkbox" defaultChecked />显示预览</CheckLabel>
            <FormatButton type="button"><Glyph>{icons.smartfmt}</Glyph>智能排版</FormatButton>
          </PreviewRow>
        </Pane>

        <Rail>
          <IconButton $w={32} $h={20} type="button" aria-label="收起">
            <Glyph color="#66686a" weight={1.4}><path d="M1 10h14" /></Glyph>
          </IconButton>
          {['brush', 'cursor', 'sliders', 'more', 'tools', 'book', 'help', 'dots'].map((name) => (
            <IconButton key={name} $w={32} $h={32} $on={name === 'brush'} type="button" aria-label={name}>
              <Glyph box={name === 'more' ? 20 : 16} weight={name === 'more' ? 1.3 : 1}>{icons[name]}</Glyph>
            </IconButton>
          ))}
        </Rail>
      </Workspace>

      <StatusBar>
        <StatusItem type="button">页面: 1/1</StatusItem>
        <VRule />
        <StatusItem type="button">字数: 0</StatusItem>
        <VRule />
        <StatusItem type="button">拼写检查: 打开<Caret /></StatusItem>
        <VRule $l={2} />
        <StatusItem type="button">校对</StatusItem>
        <Spacer />
        <IconButton type="button" aria-label="护眼模式"><Glyph>{icons.eye}</Glyph></IconButton>
        <VRule $l={7} $r={8} />
        <IconButton $w={24} $h={22} $on type="button" aria-label="页面视图"><Glyph>{icons.pageview}</Glyph></IconButton>
        <Row $gap={6}>
          <span />
          <IconButton type="button" aria-label="大纲"><Glyph>{icons.outline}</Glyph></IconButton>
          <IconButton type="button" aria-label="阅读"><Glyph>{icons.play}</Glyph></IconButton>
          <IconButton type="button" aria-label="网页"><Glyph>{icons.globe}</Glyph></IconButton>
          <IconButton type="button" aria-label="书写"><Glyph>{icons.pen}</Glyph></IconButton>
        </Row>
        <VRule $l={7} $r={8} />
        <IconButton type="button" aria-label="最佳显示"><Glyph>{icons.fit}</Glyph></IconButton>
        <ZoomValue type="button">113%<Caret /></ZoomValue>
        <IconButton type="button" aria-label="缩小">
          <Glyph size={12} box={12} weight={2}><path d="M0 6h12" /></Glyph>
        </IconButton>
        <Zoom type="range" min={0} max={100} defaultValue={50} aria-label="缩放" />
        <IconButton $w={20} type="button" aria-label="放大">
          <Glyph size={10} box={10} weight={2}><path d="M0 5h10M5 0v10" /></Glyph>
        </IconButton>
        <VRule $h={0} $l={10} />
        <IconButton type="button" aria-label="全屏"><Glyph size={14}>{icons.full}</Glyph></IconButton>
      </StatusBar>

      <Meter />
      <Watermark aria-hidden="true">
        <svg width="80" height="48" viewBox="0 0 80 48">
          <path d="M0 46C14 36 22 24 48 4L36 16C26 28 14 42 0 46zM14 4h12l14 22h-8z" fill="#fff" opacity=".55" />
          <path d="M74 6C54 4 38 18 36 30c-1 8 8 12 16 9-8-1-11-6-6-14C52 15 62 9 74 6z" fill="#4b97cf" opacity=".85" />
          <path d="M66 20c-8-4-20 2-20 8 0 5 8 6 12 2-5 0-7-3-3-5 4-3 8-3 11-5z" fill="#4b8fc8" opacity=".85" />
          <path d="M40 42c18 6 34-2 35-16-1-3-5-5-9-5 4 8-8 18-26 21z" fill="#63b35c" opacity=".85" />
        </svg>
        <WatermarkText><span>极光下载站</span><span>www.xz7.com</span></WatermarkText>
      </Watermark>
      <Overlay width="500" height="330" aria-hidden="true">
        <Arrow from={[410, 151]} to={[386, 62]} />
        <Arrow from={[209, 189]} to={[238, 132]} />
        <Arrow from={[190, 302]} to={[252, 234]} />
      </Overlay>
    </Window>
  );
}
